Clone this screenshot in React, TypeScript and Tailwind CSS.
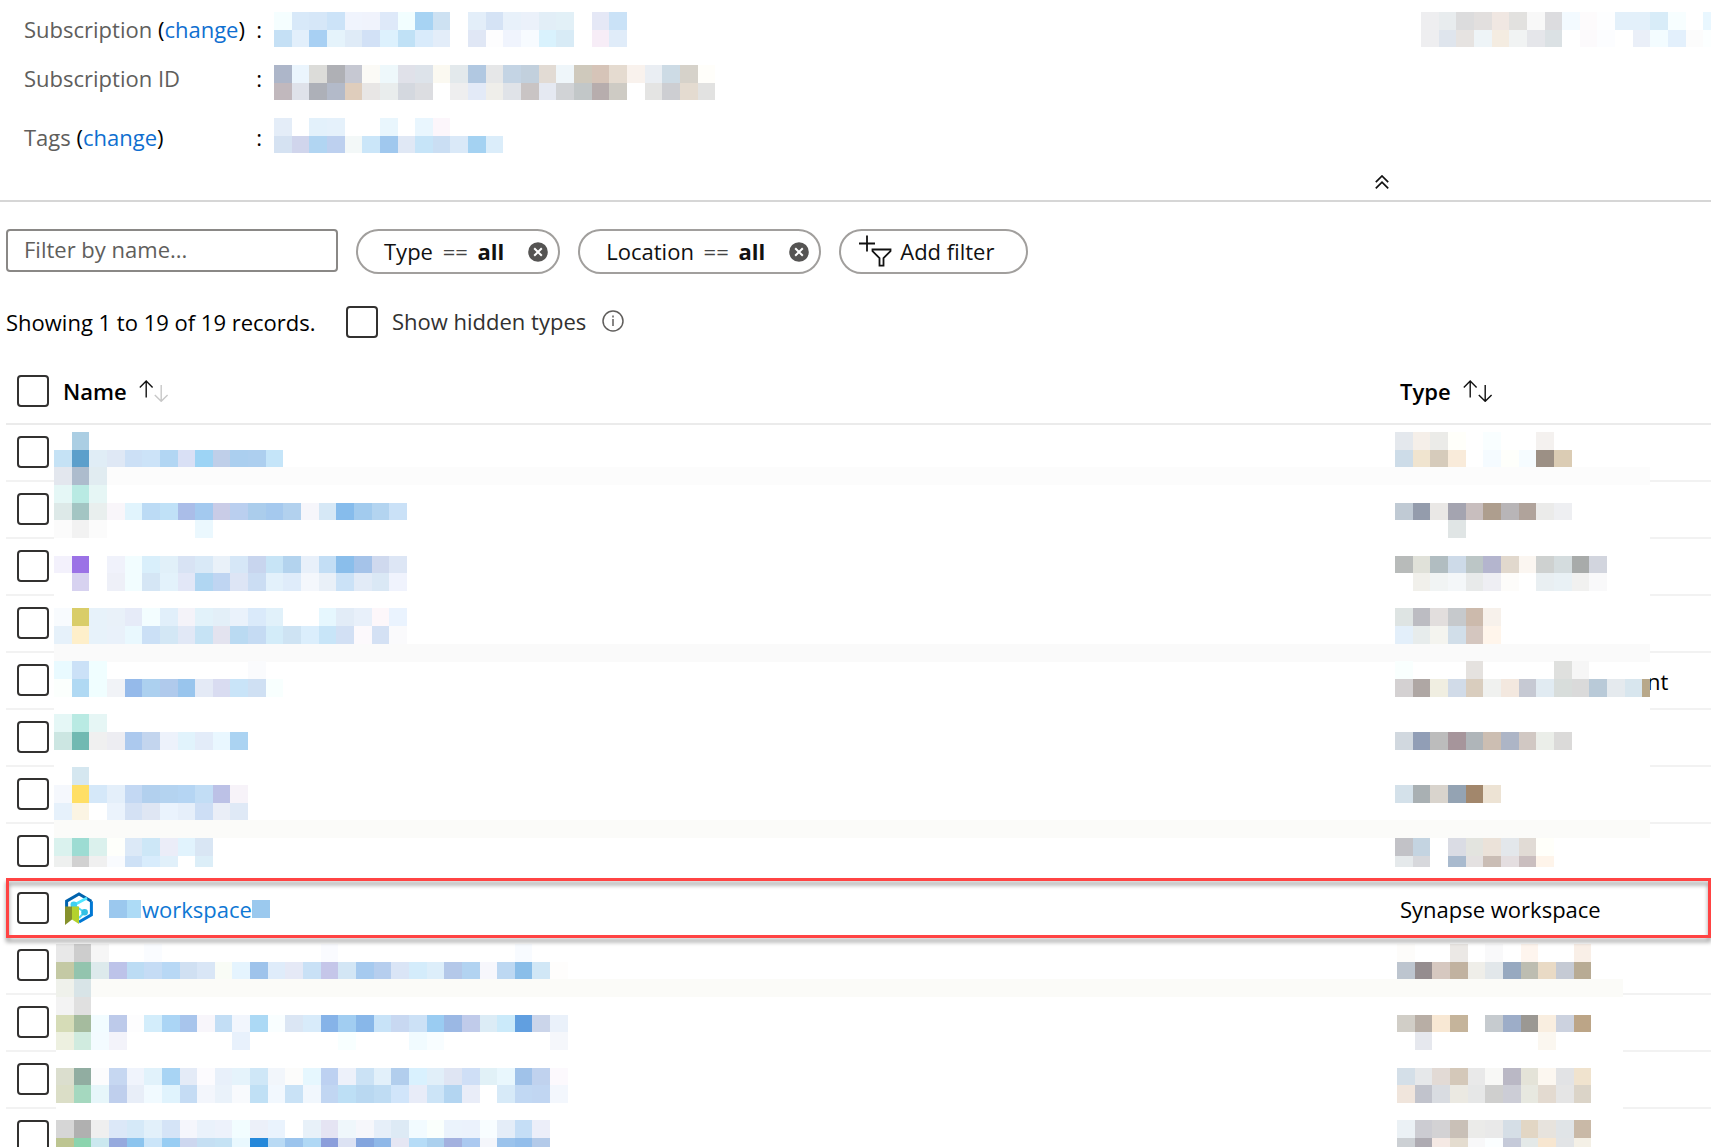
import React from "react";

const CELL = 300 / 17;

/** One strip of blurred blocks: grid row, first grid column, colours ("-" leaves a block clear). */
type Strip = [row: number, col: number, colours: string];

function Blocks({ strips, shift = 0 }: { strips: Strip[]; shift?: number }) {
  return (
    <>
      {strips.flatMap(([row, col, colours]) =>
        colours.split(" ").map((c, i) => {
          if (c === "-") return null;
          const x = Math.round((col + i) * CELL);
          const y = Math.round(row * CELL);
          return (
            <rect
              key={`${row}-${col + i}`}
              x={x - shift}
              y={y}
              width={Math.round((col + i + 1) * CELL) - x}
              height={Math.round((row + 1) * CELL) - y}
              fill={`#${c}`}
            />
          );
        })
      )}
    </>
  );
}

function Mosaic({ strips, width, height }: { strips: Strip[]; width: number; height: number }) {
  return (
    <svg width={width} height={height} aria-hidden="true" shapeRendering="crispEdges" className="shrink-0">
      <Blocks strips={strips} />
    </svg>
  );
}

/** Hides the text of several rows; the type blocks keep to the right edge. */
function Redaction({
  name,
  type,
  bands,
  span,
  className,
}: {
  name: Strip[];
  type: Strip[];
  bands: [number, string][];
  span: number;
  className: string;
}) {
  return (
    <div className={`absolute overflow-hidden bg-white ${className}`} aria-hidden="true">
      <svg width="100%" height="100%" shapeRendering="crispEdges" className="block">
        {bands.map(([row, fill]) => (
          <rect key={row} x="0" y={Math.round(row * CELL)} width="100%" height="18" fill={fill} />
        ))}
        <Blocks strips={name} />
        <svg x="100%" overflow="visible">
          <Blocks strips={type} shift={span} />
        </svg>
      </svg>
    </div>
  );
}

const subscription: Strip[] = [
  [0, 0, "f5feff d8e9f9 d6e7f8 cce3f8 f0f4fd f0f3fc dee9f9 f2feff a7d3f3 cde1f2 - e3eef9 d5e3f5 e8f1fa ebf1fa e2eef7 e2f0f7 - e5e8f6 cae2f7"],
  [1, 0, "c5e0f5 e2effb a8d0f3 e5f3fb dfebf7 d2e1f6 ddf1fd c0e1f6 d9ebfb e3edf9 - e0e7f5 fdfdfe f0f4fd f7fbff d9f2fd d8ebf6 - f7edf7 e0ecf9"],
];
const subscriptionId: Strip[] = [
  [0, 0, "adb6c9 ebf5fd dcdcd9 afb0b5 c6c8d2 fbfaf6 eef8fb e0e1e9 dde3ea fbf9f1 e3e9ec b1c8e1 e6e7e8 c4d4e4 c2d0dd e2dbd4 eff6fa cfc9bc d6c4b8 e5dbd0 f9f2ed eaeef3 cddbe5 d6d2ca fffefa"],
  [1, 0, "c1b8bd dfe2ea adb0b8 b3bac9 dfcdbc e8e6e5 e9eded d4d8df dcdde1 - eeeeef e3eaf7 efeeea e0e3e8 c9c4c4 e5e9f2 d1d3d6 c2c7c8 b7adad cecbc4 - e4e4e3 cdced2 e4dbd0 e2e2e1"],
];
const tags: Strip[] = [
  [0, 0, "e4edf8 - e3f1fb e5f1fb - - e9f6fd - e9f6fe fcf6fb"],
  [1, 0, "d5e2f2 d0d5ec b1d5f2 bdd0ef f3f8f8 cbe6f9 a0c8ee e0e8f5 c6e4f8 cadef3 dae9f8 a4d2f2 dbedfa"],
];
const sideInfo: Strip[] = [
  [0, 0, "eeeef0 e8ecee dcdcdd e2dfde f0e7e2 e2e1df f8f8f8 dcdcdf f3faff fdfbfc fdfeff e3f0fa e3f0fa d8ecf8 f7feff ffffff e9f7ff"],
  [1, 0, "eeeef0 dfe5ed e6e3e1 eef4f7 f4ece1 f1f3f3 e5e6ea dbe1e4 - fcfafc fcfdff - eaeff8 f3fcff e3f0fc fcfcfc fcffff"],
];

const upperNames: Strip[] = [
  [0, 1, "abcee3"],
  [1, 0, "c5e2f5 5c9fcb e0edf6 dfe8f5 cce0f6 cce3f8 b2d6f3 d9e0f5 9dd4f5 bfcfe9 abcfef adcfef c5e5f9"],
  [2, 0, "e3e7ee adbccd e1ecf1"],
  [3, 0, "e5f7f6 b9eae3 e6f6f5"],
  [4, 0, "dde9e8 a3c5c3 e9efee f9f6fa e1f4fd bcdbf5 c0e1f7 aabde8 a3c9ef c9cce7 bacfef abcdec a5c9ee b2d1ee f6f6fb d6e8f6 86bcec a2cbee b3d4f0 cae1f7"],
  [5, 0, "fbfbfb f2f2f2 fbfbfb - - - - - ebf8fe"],
  [7, 0, "f3f1fc 9b72e6 - f0f2fb f2fdff d9effb e1f0f9 d8e3f4 d9e9f7 e9f1f9 d6e7f7 c8d5ee c7e4f6 b3d3ee e8f0fa c3def5 8abeeb a5c3e9 cfd9ee dde6f5"],
  [8, 0, "- d7d2f0 - eef0f8 f2fdff d5e6f5 e3f2fb e2e7f7 b0d6f2 bfd5f2 dde5f5 cbddf3 e3f1fb dfecfa f4f7fc e9f0f8 cbe2f7 e2ebf7 dae8f5 f0f3fd"],
  [10, 0, "f8fbfe d9cd69 e7f2fa e9f1f9 e6ebf8 f3fdff e1effa f4f3f9 e2f2fa e3eff8 eaf2fb daeafa e1f1fa - - e6f7fe e2ecf7 e8f0fa fdf7fa eaf3fe"],
  [11, 0, "e6f1fa feefca e7f2fa e9f1fa e9f8fe cbe0f6 d3e7f5 e1e8f6 c6e3f5 e3e3ef badaf2 c5dbf3 d3ecf9 cee3f3 dbeefc c8e5f8 d2e0f4 fcf9fc d4e1f4 fafafc"],
  [13, 0, "e9faff cbe1f7 f0feff - - - - - - - - fafbfd"],
  [14, 0, "fbfffd b0d9f3 f0feff f1f3f7 95baea acd0ef b0caec 99c5ed e4eaf6 d9dcf1 c9e4f8 cfe0f3 f8fffe"],
  [16, 0, "e5f7f6 b9eae3 e6f6f5"],
  [17, 0, "cce6e2 71b9b2 f0f0f0 ededf2 acc9ee c3d5ee edf2fb e1f3fc e3ecf9 e9f7ff abd3f2"],
  [19, 1, "d5e7f0"],
  [20, 0, "f5f8fd ffdf65 d5e8f9 e4effa c3d8f3 b2d0ee b4d3f0 b5d5f3 c2ddf5 bcc1e6 f7f3f9"],
  [21, 0, "e6f1fb fbf4e3 - ebf3fc d4e1f4 dfe6f3 eaf3fd e6effa cddef5 eaeef7 dfe9f6"],
  [23, 0, "daf2ee 9ddcd3 dbf1ed fefffb dce9f7 cde7f7 ebedf8 e1f3fd d9e6f4"],
  [24, 0, "eef0ef d1d1d1 f0f0f0 f9fbfe cee1f6 d8ecfc e1f0fa - dceef8"],
];
const upperTypes: Strip[] = [
  [0, 76, "e4e8ed f5efe9 ebebe8 fffffa - f9feff - - f4f1ef"],
  [1, 76, "cddce8 f0e4cf d6cbbb f9ebda - f5fbff fefffb f6fcff 9c9085 dbccb4"],
  [4, 76, "c0cad4 949cac eae8e6 a4a4b0 c8bebe ae9e8e b8b5b7 b0a39b ebebea eeeff2"],
  [5, 79, "e0e5e5"],
  [7, 76, "b8bbba e0e1d9 b1bdc1 cddae8 bcc6c6 b4b5ce e1d8cd fbf6f1 ced1d0 d4dcde a8abaa d2d5de"],
  [8, 77, "f1f0eb f1f4f4 f4f7f9 e8eaea eeeef3 fdfcfa - e9eff2 e9f1f5 f1f1f0 f9f9fa"],
  [10, 76, "dee4e3 bcbcc2 e2dedd c6c9cc ccbaac f7f1eb"],
  [11, 76, "e3effa e7ecec f4f4ef d1dee9 d4c6bf fff5eb"],
  [13, 76, "f9fffe - - - e5e2df - - - - dfe0de f6f6f6"],
  [14, 76, "d4d1d2 afa7a4 f0eee1 d1dbe8 d9cdbe f0f1ef f3e8df c6c9d3 e1ebf2 d8dddb dadada b9cad8 e5eaee d8e6ee b8a88a"],
  [17, 76, "d1d8df 919eb6 bcbcbc a6959b afb5b9 ccbeb2 adb5c6 d1c8c3 ebeee9 dbdad9"],
  [20, 76, "d4e1ea a9b0b3 d9d4cd 94a3b3 a2876c ede3d4"],
  [23, 76, "c2c2c7 c4d4e1 - dadce4 e3e4df ebe2d9 e3e7eb e1dbd5 fffffa"],
  [24, 76, "e5e9eb d7d8dc - a9bace e4e1e1 cabdb5 e4dee0 cabebf fef4ea"],
];

const lowerNames: Strip[] = [
  [0, 0, "e8e8e8 cdcdcd f6f6f6 - - fafcff - - - - - - - - - fafbff - - - - - - - - - - f8fbff"],
  [1, 0, "c4c9a4 93c4ae ddeaec bdc3e9 bcdcf4 c5dcf5 b8d8f5 d0e0f2 d9e6f6 f9fcf6 e5f4fe 9ec3eb dfecfa e5e9f6 c9e1f6 c5c6e9 d3e6f5 a6caef b6ceee dae5f6 d4ecfb ddeefa b4c8e9 b2d3f1 f7f7fc bdd8f2 8abee9 d1e7f6 fefdfc"],
  [2, 0, "eff1eb d8e4e7"],
  [3, 0, "f3f3f3 e0e0e0"],
  [4, 0, "d6dcb7 a5bb9e f2fcff bdcaea fdfdfe d3edfb abd5f5 a8c5ec f8f6fb c3def5 f2f6fd acd9f5 f9feff dbe6f4 d8ebfa 86b3e8 a1cdf1 88b7e9 c8e3f8 c8d8f1 cce1f6 9accf2 9bb8e4 c0cbea dcecf6 cbeafa 619fe0 cbd5ea eaf1fa"],
  [5, 0, "edf0e0 d0ebdf f3fbff f3f3fa - - - - - - e8f1fc - - - - - f8ffff - - - f1fbff f8fdff - - - - - - f5f7fb"],
  [7, 0, "dbdece 91ada1 fcfcfd c6d7f1 f0f4fc e1f2fb a8d4f4 e4ebf7 fcfbfe e8f0fa e5f3fb cfe7f7 f2f6fb fcfcfb e6f7fe bdd1f1 edf1fa cbe2f5 e2f0fa b2ceed d9f1fe e1eff9 dfe5f3 cfdff6 e1f1f7 e9f7fd a0c2e9 c0d2ee fcf9fd"],
  [8, 0, "dbdec7 a5d8bf e7f6fa bfcfed e8eef8 f1faff e0f3fd c5dcf4 f3f6fc eaf2fa f8fafd c0e0f5 f2f8fe c9e2f6 f1f7fd c1d6f2 bddff5 b9d8f1 bfdcf3 d1e5fa e8ecf8 cce4f7 b3d5f1 e9edf8 - d7eaf8 c1d8f3 c1d6f2 f3f7fd"],
  [10, 0, "d6d6d6 b0b0b0 efefef dce8f8 d5e9f8 e2f0fa d5e4f7 f5f6fc eaf2fb edf2fb f2fdff ecf0f9 eaf3fd - e8f1f9 e5e4f3 eff7fb f6f7fb e6eff9 ddeaf5 f2fbff fafffc ebf3fc ebf2fc f8fdff e4edf8 c5def6 eceef9"],
  [11, 0, "bdc591 8bd4ae cbe8ef 96aade 8cc4ee cbe5f9 98cdf3 cdd7ef c5dff3 c5e2f4 e9f8fe 2588da b9daf4 9bc4ed b0d8f5 8b9edb dce2f3 83a5de 8fb8e8 e5e6f3 b6dcf7 abd0ee a3b1df abc9f0 f4f6fb 9bc3ec 93beeb b3cae9"],
];
const lowerTypes: Strip[] = [
  [0, 76, "fdfcfa - - ebe8e5 - f9f9fa - fef5ee - - f9efe7"],
  [1, 76, "bdc5cf 958d8f d6c8c0 c1b2a0 efeee9 e2e7ea 97a9c0 bdbdb1 e9dac5 c5cad4 b8ab94"],
  [4, 76, "d1cec7 b8aea5 f8e8d4 c5b49b - c6cbcf 9dadc8 9b9893 f9eee0 ccd2df bca587"],
  [5, 77, "e6e8ee - - - - - - fbf7f0"],
  [7, 76, "d4dfe8 e6e8ea e2dad5 d4c8b9 e9e9e9 f8f8f6 bab8c5 e4e3d8 fcf7f0 e2e3e5 f0e3ce"],
  [8, 76, "f0e5dc c1c3cc d9dce1 ebe9e2 e6e7e7 cfcfce cccdd6 e7e8e0 e3dad0 e5e5e5 dbd4c8"],
  [10, 76, "ebf1f5 ccccd2 d3d2d4 c9c0b7 ebebe9 e9e9e9 d5dee6 e2d6c4 e7e3dd e0e4e7 c9b9a7"],
  [11, 76, "ccd0d4 aeabb2 f5e9e4 e4dccf f8f8f9 fbfeff c5cad9 e4e9e8 f7e6d0 e2e4e6 f4f0e6"],
];

const boxClass =
  "block size-8 shrink-0 appearance-none rounded border-2 border-[#323130] bg-white checked:bg-[#0078d4]";

function InfoRow({
  label,
  change,
  strips,
  offset,
}: {
  label: string;
  change?: boolean;
  strips: Strip[];
  offset: string;
}) {
  return (
    <div className="flex h-[53px] items-start">
      <dt className={`flex w-[250px] justify-between pr-3 leading-[26px] text-[#605e5c] ${offset}`}>
        <span>
          {label}
          {change && (
            <span className="text-black">
              {" "}(
              <a href="#change" className="text-[#0f6fd0]">
                change
              </a>
              )
            </span>
          )}
        </span>
        <span className="text-black">:</span>
      </dt>
      <dd>
        <Mosaic strips={strips} width={442} height={35} />
      </dd>
    </div>
  );
}

function Pill({ field }: { field: string }) {
  return (
    <div className="flex h-[45px] items-center gap-6 rounded-full border-2 border-[#a19f9d] pr-2.5 pl-[26px]">
      <button type="button" className="pb-0.5 whitespace-pre text-[#111]">
        {field} <span className="mx-1 text-[#444]">==</span> <b>all</b>
      </button>
      <button type="button" aria-label={`Remove ${field} filter`}>
        <svg width="20" height="20" viewBox="0 0 20 20" className="block">
          <circle cx="10" cy="10" r="9.8" fill="#555453" />
          <path d="M6.2 6.2l7.6 7.6M13.8 6.2l-7.6 7.6" stroke="#fff" strokeWidth="2" />
        </svg>
      </button>
    </div>
  );
}

function SortIcon({ down }: { down: string }) {
  return (
    <svg width="30" height="22" viewBox="0 0 30 22" fill="none" strokeWidth="1.4" aria-hidden="true">
      <path d="M7.2 17.5V1M0.8 7.4L7.2 1l6.4 6.4" stroke="#111" />
      <path d="M22.2 5v16.3M15.8 14.9l6.4 6.4 6.4-6.4" stroke={down} />
    </svg>
  );
}

function SynapseIcon() {
  return (
    <svg width="28" height="33" viewBox="0 0 28 33" fill="none" aria-hidden="true" className="shrink-0">
      <path d="M14 30l12.4-7.2V9.2" stroke="#0078d4" strokeWidth="3" />
      <path d="M1.6 16V9.2L14 2l12.4 7.2" stroke="#0062ad" strokeWidth="3" />
      <path d="M9 13L22 6" stroke="#50e6ff" strokeWidth="2.6" />
      <path d="M9 13l10.5 7.3L14 26" stroke="#50d8f5" strokeWidth="2" />
      <circle cx="8.8" cy="12.8" r="3.3" fill="#3fd0f0" />
      <circle cx="19.6" cy="20.2" r="3.3" fill="#32c0e4" />
      <path d="M0 14.5h7v13L0 33z" fill="#86912c" />
      <path d="M7 14.5h7V32l-7-4.5z" fill="#b4d22e" />
    </svg>
  );
}

const rows = Array.from({ length: 13 }, (_, i) => i);

export default function App() {
  return (
    <main className="h-screen overflow-hidden bg-white font-['Open_Sans','Noto_Sans',sans-serif] text-[22px] leading-[30px] text-black">
      <section className="border-b-2 border-[#d6d6d6] pt-3">
        <div className="flex justify-between">
          <dl className="pl-6">
            <InfoRow label="Subscription" change strips={subscription} offset="pt-1" />
            <InfoRow label="Subscription ID" strips={subscriptionId} offset="pt-0" />
            <InfoRow label="Tags" change strips={tags} offset="pt-1.5" />
          </dl>
          <Mosaic strips={sideInfo} width={290} height={35} />
        </div>
        <div className="flex justify-end pt-1 pr-[322px] pb-[11px]">
          <button type="button" aria-label="Collapse essentials">
            <svg width="14" height="14" viewBox="0 0 14 14" fill="none" stroke="#111" strokeWidth="1.7" className="block">
              <path d="M0.8 7.2L7 1l6.2 6.2M0.8 13.4L7 7.2l6.2 6.2" />
            </svg>
          </button>
        </div>
      </section>

      <div className="flex items-start gap-[18px] pt-[27px] pl-1.5">
        <input
          type="text"
          aria-label="Filter by name"
          placeholder="Filter by name..."
          className="h-[43px] w-[332px] rounded border-2 border-[#8a8886] px-4 pb-1 placeholder:text-[#605e5c]"
        />
        <Pill field="Type" />
        <Pill field="Location" />
        <button type="button" className="flex h-[45px] items-center gap-2 rounded-full border-2 border-[#a19f9d] pr-8 pb-0.5 pl-[18px] text-[#111]">
          <svg width="33" height="32" viewBox="0 0 33 32" fill="none" stroke="#111" strokeWidth="1.8" aria-hidden="true">
            <path d="M0 8.5h16M8 0.5v16" />
            <path d="M13.5 14.5h18v1.6l-7 7v7.5h-4v-7.5l-7-7z" />
          </svg>
          Add filter
        </button>
      </div>

      <div className="mt-8 flex h-8 items-center pl-1.5">
        <p className="w-[340px]">Showing 1 to 19 of 19 records.</p>
        <input id="hidden-types" type="checkbox" className={boxClass} />
        <label htmlFor="hidden-types" className="pb-0.5 pl-3.5 text-[#323130]">
          Show hidden types
        </label>
        <svg width="22" height="22" viewBox="0 0 22 22" className="mb-0.5 ml-4" role="img" aria-label="Info">
          <circle cx="11" cy="11" r="10" fill="none" stroke="#605e5c" strokeWidth="1.5" />
          <path d="M11 9v7M11 5.6v1.8" stroke="#605e5c" strokeWidth="1.5" />
        </svg>
      </div>

      <div className="relative mt-[19px] ml-1.5">
        <table className="w-full table-fixed border-separate border-spacing-0 text-left">
          <thead>
            <tr>
              <th className="h-[68px] w-[57px] border-b-2 border-[#ebebeb] pt-0.5 pl-[11px]">
                <input type="checkbox" aria-label="Select all" className={boxClass} />
              </th>
              <th className="border-b-2 border-[#ebebeb] pt-0.5 font-semibold">
                <div className="flex items-center gap-3">
                  Name <SortIcon down="#c8c8c8" />
                </div>
              </th>
              <th className="w-[311px] border-b-2 border-[#ebebeb] pt-0.5 font-semibold">
                <div className="flex items-center gap-3">
                  Type <SortIcon down="#111" />
                </div>
              </th>
            </tr>
          </thead>
          <tbody>
            {rows.map((i) => (
              <tr key={i}>
                <td className="h-[57px] border-b-2 border-[#f2f2f2] pb-px pl-[11px]">
                  <input type="checkbox" aria-label={`Select row ${i + 1}`} className={boxClass} />
                </td>
                <td className="border-b-2 border-[#f2f2f2]">
                  {i === 8 && (
                    <a href="#workspace" className="flex items-center pl-0.5 text-[#0f78d4]">
                      <SynapseIcon />
                      <span className="ml-4 h-[18px] w-[18px] bg-[#9bc8ee]" />
                      <span className="mr-px h-[18px] w-3.5 bg-[#addbf6]" />
                      workspace
                      <span className="h-[18px] w-[18px] bg-[#9bc9ee]" />
                    </a>
                  )}
                </td>
                <td className="border-b-2 border-[#f2f2f2]">
                  {i === 4 && <span className="block pl-[247px]">nt</span>}
                  {i === 8 && "Synapse workspace"}
                </td>
              </tr>
            ))}
          </tbody>
        </table>

        <Redaction
          name={upperNames}
          type={upperTypes}
          bands={[
            [2, "#fcfcfc"],
            [12, "#fafafa"],
            [22, "#fbfbf9"],
          ]}
          span={1596}
          className="top-[75px] right-[61px] left-12 h-[435px]"
        />
        <Redaction
          name={lowerNames}
          type={lowerTypes}
          bands={[[2, "#fbfbf8"]]}
          span={1567}
          className="top-[587px] right-[88px] left-[50px] h-[203px]"
        />
        <div className="pointer-events-none absolute top-[521px] right-0 left-0 h-[60px] border-[3px] border-[#ff4343] drop-shadow-[0px_4px_2px_rgba(0,0,0,0.4)]" />
      </div>
    </main>
  );
}
